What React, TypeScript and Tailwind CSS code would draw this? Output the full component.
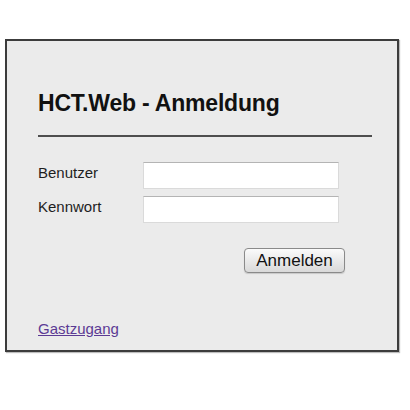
import React from 'react';

const App: React.FC = () => {
  return (
    <div
      className="w-[410px] h-[410px] bg-white overflow-hidden"
      style={{ fontFamily: '"Liberation Sans", Arial, sans-serif' }}
    >
      <div className="ml-[5px] mt-[39px] w-[394px] h-[313px] bg-[#ebebeb] border-2 border-[#3c3c3c] shadow-[1px_1px_1px_#bdbdbd] pl-[31px] pt-[49px]">
        {/* Heading */}
        <h1 className="text-[23px] leading-[26px] font-bold text-[#111] tracking-[-0.2px]">
          HCT.Web - Anmeldung
        </h1>
        <div className="mt-[19px] w-[334px] h-[2px] bg-[#4e4e4e]" />

        {/* Login form */}
        <div className="mt-[25px] grid grid-cols-[105px_196px] gap-y-[7px]">
          <label className="pt-[2px] text-[15px] leading-[18px] text-[#1e1e1e]">Benutzer</label>
          <input
            type="text"
            className="h-[27px] bg-white border border-[#dadada] border-t-[#b4b4b4] outline-none"
          />
          <label className="pt-[2px] text-[15px] leading-[18px] text-[#1e1e1e]">Kennwort</label>
          <input
            type="password"
            className="h-[27px] bg-white border border-[#dadada] border-t-[#b4b4b4] outline-none"
          />
        </div>

        <div className="mt-[25px] w-[307px] flex justify-end">
          <button className="w-[101px] h-[25px] rounded-[4px] border border-[#8a8a8a] bg-gradient-to-b from-[#fbfbfb] to-[#d9d9d9] text-[17px] leading-[20px] text-[#111] shadow-[0_1px_1px_#c8c8c8]">
            Anmelden
          </button>
        </div>

        <a href="#" className="block mt-[47px] w-fit text-[15px] leading-[18px] text-[#5b3a94] underline">
          Gastzugang
        </a>
      </div>
    </div>
  );
};

export default App;
